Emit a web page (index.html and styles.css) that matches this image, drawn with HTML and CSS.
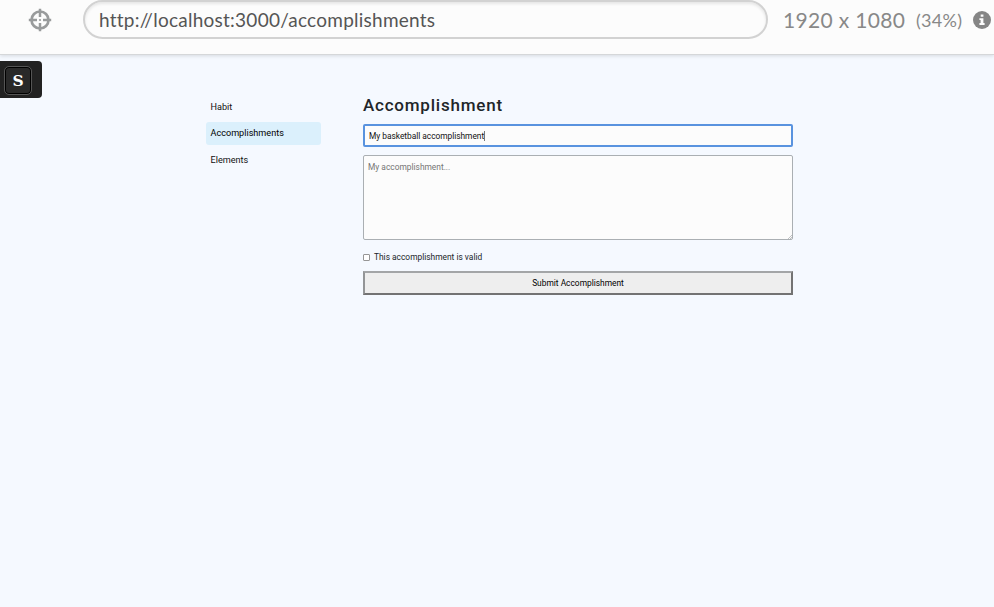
FILE: index.html
```html
<!DOCTYPE html>
<html lang="en">
<head>
<meta charset="utf-8">
<title>Accomplishments</title>
<link rel="stylesheet" href="styles.css">
</head>
<body>
<header class="toolbar">
  <svg class="target" viewBox="0 0 24 24" fill="none" stroke="#999b9c">
    <circle cx="12" cy="12" r="8.5" stroke-width="2.7"/>
    <path d="M12 .8V9M12 15v8.2M.8 12H9M15 12h8.2" stroke-width="2.5"/>
    <circle cx="12" cy="12" r="1.1" fill="#999b9c" stroke="none"/>
  </svg>
  <div class="address"><span class="url">http://localhost:3000/accomplishments</span></div>
  <span class="size">1920 x 1080</span>
  <span class="scale">(34%)</span>
  <svg class="info" viewBox="0 0 18 18">
    <circle cx="9" cy="9" r="9" fill="#858585"/>
    <path d="M7.7 3.4h2.7v2.4H7.7zM6.4 7.2h4v4.9h1.2v1.8H6.4v-1.8h1.2V9H6.4z" fill="#fcfcfc"/>
  </svg>
</header>
<div class="badge"><span class="key">S</span></div>
<div class="page">
  <nav class="menu">
    <a class="item">Habit</a>
    <a class="item active">Accomplishments</a>
    <a class="item">Elements</a>
  </nav>
  <main class="form">
    <h1 class="title">Accomplishment</h1>
    <div class="field"><span class="value">My basketball accomplishment</span><span class="caret"></span></div>
    <div class="area"><span class="placeholder">My accomplishment...</span>
      <svg class="grip" viewBox="0 0 4 4" stroke="#a5a8aa" stroke-width=".7"><path d="M0 4L4 0M2 4L4 2"/></svg>
    </div>
    <label class="check"><span class="box"></span><span class="check-text">This accomplishment is valid</span></label>
    <div class="submit"><span class="submit-text">Submit Accomplishment</span></div>
  </main>
</div>
</body>
</html>
```
FILE: styles.css
```css
* { box-sizing: border-box; }
body {
  margin: 0;
  height: 607px;
  overflow: hidden;
  background: #f5f9ff;
  color: #111;
  font: 8.4px/12px Roboto, sans-serif;
}
.toolbar {
  position: relative;
  display: flex;
  height: 55px;
  background: #fcfcfc;
  border-bottom: 1px solid #d5d7d9;
  box-shadow: 0 1px 4px rgba(0, 0, 0, .13);
  font-family: Lato, sans-serif;
  white-space: nowrap;
}
.target { width: 24px; height: 24px; margin: 8px 0 0 28px; flex: none; }
.address {
  width: 685px;
  height: 39px;
  margin-left: 31px;
  padding-left: 14px;
  flex: none;
  border: 2px solid #d2d2d2;
  border-radius: 20px;
  box-shadow: inset 0 2px 3px rgba(0, 0, 0, .09);
  color: #555;
  font-size: 19px;
  line-height: 35px;
}
.url { letter-spacing: .25px; }
.size { width: 133px; margin-left: 15px; color: #888; font-size: 21px; line-height: 39px; letter-spacing: .32px; flex: none; }
.scale { width: 57px; color: #888; font-size: 18px; line-height: 41px; letter-spacing: .3px; flex: none; }
.info { width: 18px; height: 18px; margin-top: 11px; flex: none; }
.badge {
  display: flex;
  width: 42px;
  height: 37px;
  margin-top: 6px;
  padding: 5px 0 0 4px;
  background: #222;
  border-radius: 0 4px 4px 0;
}
.key {
  width: 28px;
  height: 29px;
  border: 1px solid #555;
  border-radius: 5px;
  background: #292929;
  box-shadow: inset 0 0 0 1px #000;
  color: #fff;
  font: bold 15.5px/28px "DejaVu Serif", serif;
  text-align: center;
}
.page { display: flex; gap: 42px; padding-left: 206px; }
.menu { width: 115px; margin-top: -2px; display: flex; flex-direction: column; gap: 4px; }
.item { height: 22.4px; padding-left: 4.5px; line-height: 22px; border-radius: 3px; color: #111; font-size: 9.1px; }
.active { background: #dbf0fc; color: #000; line-height: 23px; }
.form { width: 430px; }
.title { margin: 0; height: 26px; color: #212529; font-size: 17px; font-weight: 500; line-height: 15px; letter-spacing: .78px; }
.field {
  display: flex;
  align-items: center;
  height: 23px;
  padding-left: 4px;
  border: 2px solid #5993df;
  border-radius: 2px;
  background: #fcfcfc;
}
.value { letter-spacing: -.03px; }
.caret { width: 1px; height: 10px; background: #777; }
.area {
  position: relative;
  height: 85px;
  margin-top: 8px;
  padding: 5px 4px;
  border: 1px solid #aaafb3;
  border-radius: 2px;
  background: #fcfcfc;
  color: #757575;
}
.grip { position: absolute; right: 0; bottom: 0; width: 4px; height: 4px; }
.check { display: flex; align-items: center; height: 12px; margin-top: 11px; color: #212529; }
.box { width: 7px; height: 7px; margin: 1px 4px 0 0; border: 1px solid #969696; border-radius: 1px; background: #fff; }
.submit {
  height: 24px;
  margin-top: 8px;
  border: 2px solid;
  border-color: #a3a5a7 #737373 #737373 #939597;
  background: #eee;
  color: #000;
  line-height: 20px;
  text-align: center;
}
```
